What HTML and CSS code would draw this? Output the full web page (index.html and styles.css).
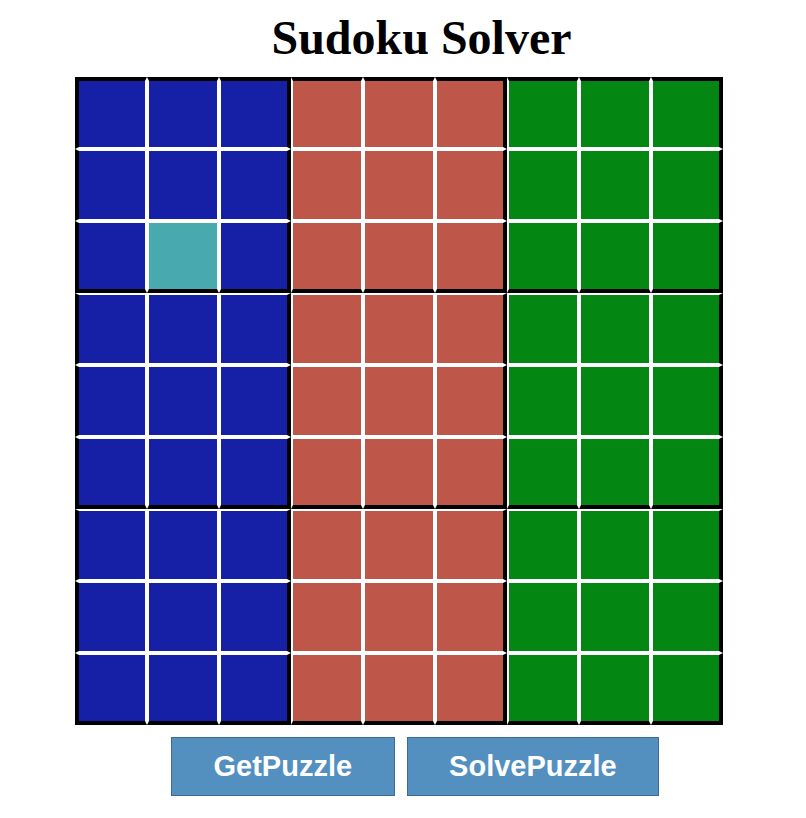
FILE: index.html
```html
<!DOCTYPE html>
<html lang="en">
<head>
<meta charset="utf-8">
<title>Sudoku Solver</title>
<link rel="stylesheet" href="styles.css">
</head>
<body>
<h1 class="title">Sudoku Solver</h1>
<div class="board">
  <div class="cell blue"></div><div class="cell blue"></div><div class="cell blue"></div><div class="cell red"></div><div class="cell red"></div><div class="cell red"></div><div class="cell green"></div><div class="cell green"></div><div class="cell green"></div>
  <div class="cell blue"></div><div class="cell blue"></div><div class="cell blue"></div><div class="cell red"></div><div class="cell red"></div><div class="cell red"></div><div class="cell green"></div><div class="cell green"></div><div class="cell green"></div>
  <div class="cell blue"></div><div class="cell selected"></div><div class="cell blue"></div><div class="cell red"></div><div class="cell red"></div><div class="cell red"></div><div class="cell green"></div><div class="cell green"></div><div class="cell green"></div>
  <div class="cell blue"></div><div class="cell blue"></div><div class="cell blue"></div><div class="cell red"></div><div class="cell red"></div><div class="cell red"></div><div class="cell green"></div><div class="cell green"></div><div class="cell green"></div>
  <div class="cell blue"></div><div class="cell blue"></div><div class="cell blue"></div><div class="cell red"></div><div class="cell red"></div><div class="cell red"></div><div class="cell green"></div><div class="cell green"></div><div class="cell green"></div>
  <div class="cell blue"></div><div class="cell blue"></div><div class="cell blue"></div><div class="cell red"></div><div class="cell red"></div><div class="cell red"></div><div class="cell green"></div><div class="cell green"></div><div class="cell green"></div>
  <div class="cell blue"></div><div class="cell blue"></div><div class="cell blue"></div><div class="cell red"></div><div class="cell red"></div><div class="cell red"></div><div class="cell green"></div><div class="cell green"></div><div class="cell green"></div>
  <div class="cell blue"></div><div class="cell blue"></div><div class="cell blue"></div><div class="cell red"></div><div class="cell red"></div><div class="cell red"></div><div class="cell green"></div><div class="cell green"></div><div class="cell green"></div>
  <div class="cell blue"></div><div class="cell blue"></div><div class="cell blue"></div><div class="cell red"></div><div class="cell red"></div><div class="cell red"></div><div class="cell green"></div><div class="cell green"></div><div class="cell green"></div>
</div>
<div class="actions">
  <button class="btn" type="button">GetPuzzle</button>
  <button class="btn" type="button">SolvePuzzle</button>
</div>
</body>
</html>
```
FILE: styles.css
```css
html, body {
  margin: 0;
  padding: 0;
  background: #ffffff;
}

.title {
  margin: 0;
  padding: 10px 0 0 37px;
  font-family: "Liberation Serif", "Times New Roman", serif;
  font-weight: 700;
  font-size: 48px;
  line-height: 55px;
  color: #000000;
  text-align: center;
}

.board {
  display: grid;
  grid-template-columns: repeat(9, 72px);
  grid-template-rows: repeat(9, 72px);
  width: 648px;
  margin: 12px 0 0 75px;
}

.cell {
  box-sizing: border-box;
  width: 72px;
  height: 72px;
  border: 2px solid #ffffff;
}

.cell:nth-child(9n+1) {
  border-left: 4px solid #000000;
}

.cell:nth-child(3n) {
  border-right: 4px solid #000000;
}

.cell:nth-child(-n+9) {
  border-top: 4px solid #000000;
}

.cell:nth-child(n+19):nth-child(-n+27),
.cell:nth-child(n+46):nth-child(-n+54),
.cell:nth-child(n+73):nth-child(-n+81) {
  border-bottom: 4px solid #000000;
}

.blue { background: #1520a6; }
.red { background: #be5649; }
.green { background: #038712; }
.selected { background: #48aaae; }

.actions {
  display: flex;
  gap: 12px;
  margin: 12px 0 0 171px;
}

.btn {
  box-sizing: border-box;
  height: 59px;
  padding: 0 41.5px;
  margin: 0;
  border: 1px solid #3b6c99;
  border-radius: 0;
  background: #5390c0;
  color: #ffffff;
  font-family: "Liberation Sans", Arial, sans-serif;
  font-weight: 700;
  font-size: 29px;
  cursor: pointer;
}
```
